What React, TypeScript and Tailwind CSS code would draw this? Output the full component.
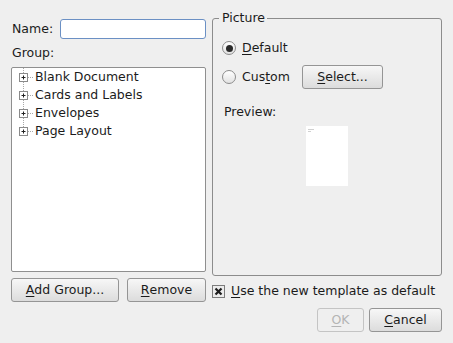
import React from "react"

const groups = ["Blank Document", "Cards and Labels", "Envelopes", "Page Layout"]

function Btn({ children, className = "", disabled = false }: { children: React.ReactNode; className?: string; disabled?: boolean }) {
  return (
    <button
      className={`h-[24px] shrink-0 rounded-[3px] border flex items-center justify-center leading-[14px] ${
        disabled
          ? "border-[#c4c4c4] bg-[#efefef] text-[#b4b4b4]"
          : "border-[#959595] bg-gradient-to-b from-[#f7f7f7] to-[#dcdcdc] text-[#1b1b1b]"
      } ${className}`}
    >
      {children}
    </button>
  )
}

function U({ children }: { children: React.ReactNode }) {
  return <span className="underline decoration-1 underline-offset-2">{children}</span>
}

function Radio({ checked }: { checked?: boolean }) {
  return (
    <span className="w-[14px] h-[14px] shrink-0 rounded-full border border-[#8c8c8c] bg-gradient-to-b from-white to-[#e2e2e2] flex items-center justify-center">
      {checked && <span className="w-[7px] h-[7px] rounded-full bg-[#2a2a2a]" />}
    </span>
  )
}

function TreeRow({ label, last }: { label: string; last: boolean }) {
  return (
    <div className="flex items-center h-[18px]">
      <svg width="23" height="18" className="shrink-0">
        <line x1="11.5" y1="0" x2="11.5" y2={last ? 9 : 18} stroke="#a8a8a8" strokeDasharray="1 1" />
        <line x1="16" y1="9.5" x2="22" y2="9.5" stroke="#a8a8a8" strokeDasharray="1 1" />
        <rect x="7.5" y="5.5" width="8" height="8" fill="#fff" stroke="#8a8a8a" />
        <line x1="9.5" y1="9.5" x2="13.5" y2="9.5" stroke="#222" />
        <line x1="11.5" y1="7.5" x2="11.5" y2="11.5" stroke="#222" />
      </svg>
      <span className="leading-[14px]">{label}</span>
    </div>
  )
}

export default function App() {
  return (
    <div className="w-[453px] h-[343px] bg-[#efefef] p-[11px] flex flex-col text-[12.5px] text-[#1b1b1b] font-['DejaVu_Sans',sans-serif]">
      <div className="flex gap-[6px] h-[291px]">
        {/* left column */}
        <div className="w-[195px] shrink-0 flex flex-col pt-[8px]">
          <div className="flex items-center h-[20px]">
            <span className="w-[49px] shrink-0 pl-[1px] leading-[14px]">Name:</span>
            <input className="w-[146px] min-w-0 shrink-0 h-[20px] rounded-[3px] border border-[#6b90c4] bg-white outline-none" />
          </div>
          <div className="mt-[7px] h-[14px] leading-[14px] pl-[1px]">Group:</div>
          <div className="mt-[7px] flex-1 border border-[#8f8f8f] rounded-[2px] bg-white">
            {groups.map((g, i) => (
              <TreeRow key={g} label={g} last={i === groups.length - 1} />
            ))}
          </div>
          <div className="mt-[6px] flex gap-[8px]">
            <Btn className="w-[108px]">
              <U>A</U>dd Group...
            </Btn>
            <Btn className="w-[79px]">
              <U>R</U>emove
            </Btn>
          </div>
        </div>

        {/* right column */}
        <div className="w-[230px] shrink-0 flex flex-col pt-[7px]">
          <div className="relative flex-1 border border-[#8c8c8c] rounded-[3px] flex flex-col items-start pl-[9px] pt-[19px]">
            <span className="absolute left-[6px] top-[-8px] leading-[14px] bg-[#efefef] pl-[3px] pr-[2px]">Picture</span>
            <div className="flex items-center h-[20px] gap-[6px]">
              <Radio checked />
              <span className="leading-[14px]">
                <U>D</U>efault
              </span>
            </div>
            <div className="w-[161px] flex items-center h-[24px] mt-[7px] gap-[6px]">
              <Radio />
              <span className="leading-[14px]">
                Cus<U>t</U>om
              </span>
              <Btn className="w-[81px] ml-auto">
                <U>S</U>elect...
              </Btn>
            </div>
            <div className="mt-[16px] pl-[2px] h-[14px] leading-[14px]">Preview:</div>
            <div className="mt-[7px] ml-[84px] w-[42px] h-[60px] bg-white flex flex-col gap-[1px] pt-[3px] pl-[2px]">
              <span className="w-[6px] h-px bg-[#d0d0d0]" />
              <span className="w-[3px] h-px bg-[#d0d0d0]" />
            </div>
          </div>
          <div className="mt-[2px] h-[24px] flex items-center gap-[6px] pt-[2px]">
            <svg width="13" height="13" className="shrink-0">
              <rect x="0.5" y="0.5" width="12" height="12" fill="#ececec" stroke="#7c7c7c" />
              <path d="M3.5 3.5 L9.5 9.5 M9.5 3.5 L3.5 9.5" stroke="#1e1e1e" strokeWidth="2.2" />
            </svg>
            <span className="leading-[14px] whitespace-nowrap">
              <U>U</U>se the new template as default
            </span>
          </div>
        </div>
      </div>

      <div className="mt-[6px] flex justify-end gap-[5px]">
        <Btn className="w-[47px]" disabled>
          <U>O</U>K
        </Btn>
        <Btn className="w-[73px]">
          <U>C</U>ancel
        </Btn>
      </div>
    </div>
  )
}
